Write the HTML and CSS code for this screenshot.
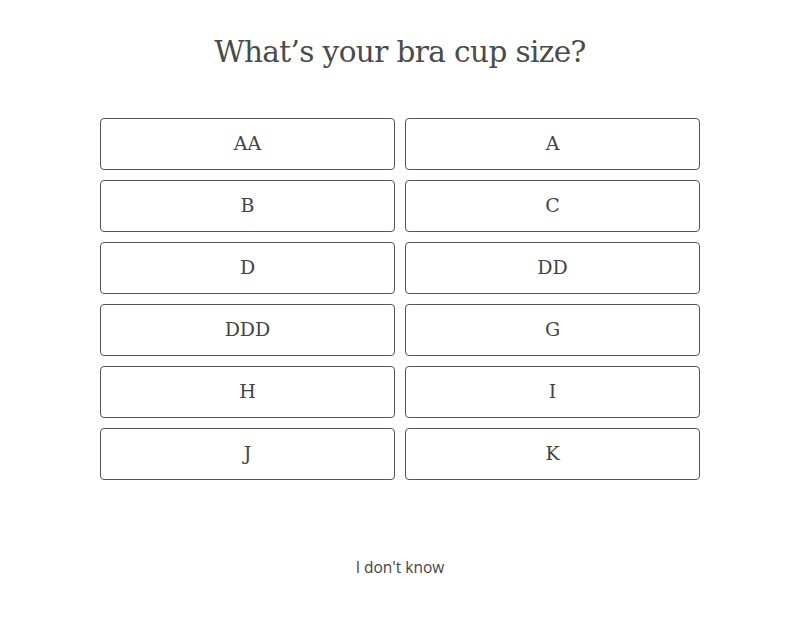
FILE: index.html
```html
<!DOCTYPE html>
<html>
<head>
<meta charset="utf-8">
<link rel="stylesheet" href="styles.css">
</head>
<body>
<main class="quiz">
  <h1 class="title">What’s your bra cup size?</h1>
  <div class="options">
    <button class="opt">AA</button>
    <button class="opt">A</button>
    <button class="opt">B</button>
    <button class="opt">C</button>
    <button class="opt">D</button>
    <button class="opt">DD</button>
    <button class="opt">DDD</button>
    <button class="opt">G</button>
    <button class="opt">H</button>
    <button class="opt">I</button>
    <button class="opt">J</button>
    <button class="opt">K</button>
  </div>
  <button class="skip">I don't know</button>
</main>
</body>
</html>
```

FILE: styles.css
```css
html, body {
  margin: 0;
  padding: 0;
  background: #fff;
}
.quiz {
  display: flex;
  flex-direction: column;
  align-items: center;
  padding-top: 30px;
}
.title {
  margin: 0;
  font-family: "DejaVu Serif", serif;
  font-weight: normal;
  font-size: 29.5px;
  line-height: 44px;
  color: #4a4a4a;
  letter-spacing: -0.6px;
}
.options {
  margin-top: 44px;
  display: grid;
  grid-template-columns: 295px 295px;
  gap: 10px;
}
.opt {
  height: 52px;
  border: 1px solid #555;
  border-radius: 4px;
  background: #fff;
  font-family: "DejaVu Serif", serif;
  font-size: 19px;
  color: #444;
  padding: 0 0 2px;
  cursor: pointer;
}
.skip {
  margin-top: 76px;
  border: none;
  background: none;
  font-family: "Open Sans", sans-serif;
  font-size: 15.5px;
  color: #444;
  padding: 0;
}
```
